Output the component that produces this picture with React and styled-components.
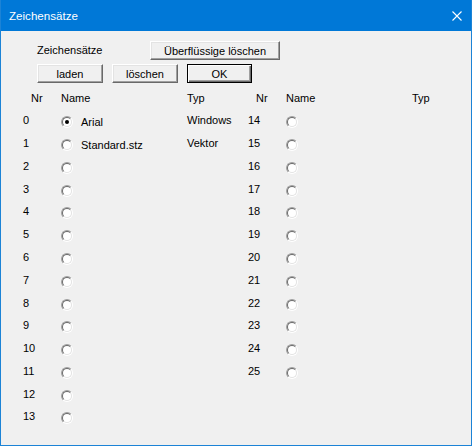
import styled, { createGlobalStyle } from "styled-components";

const GlobalStyle = createGlobalStyle`
    html, body {
        margin: 0;
        padding: 0;
        background: #f0f0f0;
    }
    * {
        box-sizing: border-box;
    }
`;

const leftRows = [
    { nr: 0, name: "Arial", typ: "Windows", checked: true },
    { nr: 1, name: "Standard.stz", typ: "Vektor" },
    ...Array.from({ length: 12 }, (_, i) => ({ nr: i + 2 })),
];

const rightRows = Array.from({ length: 12 }, (_, i) => ({ nr: i + 14 }));

const CloseIcon = () => (
    <svg width="10" height="10" viewBox="0 0 10 10">
        <path d="M0.5 0.5 L9.5 9.5 M9.5 0.5 L0.5 9.5" stroke="#fff" strokeWidth="1.1" fill="none" />
    </svg>
);

const Group = ({ rows }) => (
    <GroupBox>
        <Row $header>
            <HeadCell $shift={8}>Nr</HeadCell>
            <HeadCell $span>Name</HeadCell>
            <HeadCell>Typ</HeadCell>
        </Row>
        {rows.map((row) => (
            <Row key={row.nr}>
                <Cell>{row.nr}</Cell>
                <RadioCell>
                    <Radio>
                        <RadioInner>{row.checked && <Dot />}</RadioInner>
                    </Radio>
                </RadioCell>
                <NameCell>{row.name}</NameCell>
                <Cell>{row.typ}</Cell>
            </Row>
        ))}
    </GroupBox>
);

const App = () => {
    return (
        <>
            <GlobalStyle />
            <Window>
                <TitleBar>
                    <Title>Zeichensätze</Title>
                    <CloseButton>
                        <CloseIcon />
                    </CloseButton>
                </TitleBar>
                <Body>
                    <Controls>
                        <TopRow>
                            <Label>Zeichensätze</Label>
                            <Button $width={130}>Überflüssige löschen</Button>
                        </TopRow>
                        <ButtonRow>
                            <Button $width={66}>laden</Button>
                            <Button $width={66}>löschen</Button>
                            <Button $width={65} $default>OK</Button>
                        </ButtonRow>
                    </Controls>
                    <Table>
                        <Group rows={leftRows} />
                        <Group rows={rightRows} />
                    </Table>
                </Body>
            </Window>
        </>
    );
};

export default App;

const Window = styled.div`
    width: 472px;
    height: 446px;
    display: flex;
    flex-direction: column;
    background: #f0f0f0;
    border: 1px solid #1c83d6;
    border-top: none;
    font-family: "Liberation Sans", Arial, sans-serif;
    font-size: 11px;
    color: #000;
`;

const TitleBar = styled.div`
    height: 31px;
    flex-shrink: 0;
    background: #0078d7;
    display: flex;
    align-items: center;
    justify-content: space-between;
    padding: 0 9px 0 8px;
    color: #fff;
`;

const Title = styled.span`
    font-size: 11.6px;
    line-height: 14px;
    margin-top: 1px;
`;

const CloseButton = styled.div`
    display: flex;
    align-items: center;
`;

const Body = styled.div`
    flex: 1;
    padding: 10px 0 0 22px;
    display: flex;
    flex-direction: column;
`;

const Controls = styled.div`
    padding-left: 14px;
    display: flex;
    flex-direction: column;
    gap: 4px;
`;

const TopRow = styled.div`
    display: flex;
    align-items: center;
    height: 19px;
`;

const Label = styled.span`
    width: 113px;
    line-height: 14px;
    margin-top: -1px;
`;

const ButtonRow = styled.div`
    display: flex;
    gap: 9px;
    height: 19px;
`;

const Button = styled.div`
    width: ${(p) => p.$width}px;
    height: 19px;
    display: flex;
    align-items: center;
    justify-content: center;
    background: #f0f0f0;
    line-height: 14px;
    border: 1px solid;
    border-color: ${(p) => (p.$default ? "#000" : "#fff #696969 #696969 #fff")};
    box-shadow: ${(p) =>
        p.$default
            ? "inset 1px 1px #fff, inset -1px -1px #696969, inset -2px -2px #a0a0a0"
            : "inset -1px -1px #a0a0a0, inset 1px 1px #e3e3e3"};
`;

const Table = styled.div`
    display: flex;
    margin-top: 8px;
`;

const GroupBox = styled.div`
    width: 225px;
    display: flex;
    flex-direction: column;
`;

const Row = styled.div`
    display: grid;
    flex-shrink: 0;
    grid-template-columns: 38px 20px 106px 61px;
    align-items: ${(p) => (p.$header ? "start" : "center")};
    height: ${(p) => (p.$header ? "18px" : "22.77px")};
    line-height: 14px;
`;

const Cell = styled.span`
    white-space: nowrap;
`;

const HeadCell = styled.span`
    padding-left: ${(p) => p.$shift || 0}px;
    grid-column: ${(p) => (p.$span ? "span 2" : "auto")};
    white-space: nowrap;
`;

const RadioCell = styled.span`
    display: flex;
    padding-top: 4px;
`;

const NameCell = styled.span`
    padding-top: 4px;
    white-space: nowrap;
`;

const Radio = styled.span`
    width: 12px;
    height: 12px;
    border-radius: 50%;
    border: 1px solid;
    border-color: #a0a0a0 #fff #fff #a0a0a0;
    display: flex;
`;

const RadioInner = styled.span`
    width: 10px;
    height: 10px;
    border-radius: 50%;
    border: 1px solid;
    border-color: #696969 #e3e3e3 #e3e3e3 #696969;
    background: #fff;
    display: flex;
    align-items: center;
    justify-content: center;
`;

const Dot = styled.span`
    width: 4px;
    height: 4px;
    border-radius: 50%;
    background: #000;
`;
